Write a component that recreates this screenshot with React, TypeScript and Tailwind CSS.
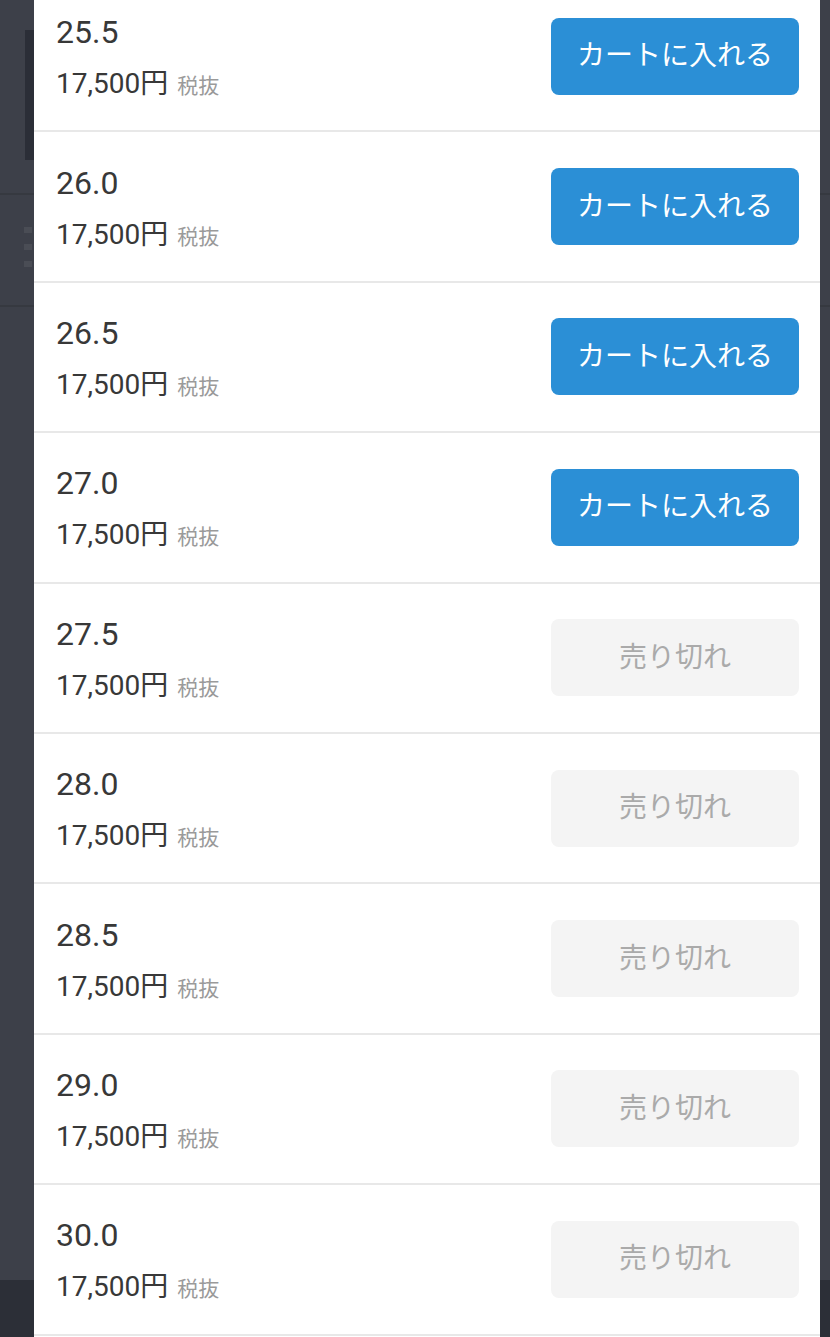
import React from "react";

const rows = [
  { size: "25.5", ok: true },
  { size: "26.0", ok: true },
  { size: "26.5", ok: true },
  { size: "27.0", ok: true },
  { size: "27.5", ok: false },
  { size: "28.0", ok: false },
  { size: "28.5", ok: false },
  { size: "29.0", ok: false },
  { size: "30.0", ok: false },
];

export default function App() {
  return (
    <div
      className="relative w-[830px] h-[1337px] overflow-hidden bg-[#3d4049]"
      style={{ fontFamily: "Roboto, 'Noto Sans CJK JP', sans-serif" }}
    >
      {/* dimmed page behind */}
      <div className="flex flex-col h-full">
        <div className="h-[195px] border-b-2 border-[#363940] pt-[30px]">
          <div className="ml-[25px] w-[10px] h-[130px] bg-[#2b2e37]" />
        </div>
        <div className="h-[112px] border-b-2 border-[#363940] flex flex-col gap-[11px] pt-[32px] pl-[24px]">
          <div className="w-[8px] h-[6px] bg-[#4a4d55]" />
          <div className="w-[8px] h-[6px] bg-[#4a4d55]" />
          <div className="w-[8px] h-[6px] bg-[#4a4d55]" />
        </div>
        <div className="flex-1" />
        <div className="h-[57px] bg-[#2c2f37]" />
      </div>

      {/* modal panel */}
      <div className="absolute top-0 left-[34px] w-[786px] h-full bg-white">
        <div className="mt-[-18px]">
          {rows.map((r) => (
            <div
              key={r.size}
              className="h-[150.4px] border-b-2 border-[#e8e8e8] flex items-center justify-between pl-[22px] pr-[21px]"
            >
              <div className="flex flex-col pt-[6px]">
                <div className="text-[32px] leading-[46px] text-[#383838]">{r.size}</div>
                <div className="mt-[6px] leading-[46px] flex items-baseline">
                  <span className="text-[28px] text-[#383838]">17,500円</span>
                  <span className="ml-[9px] text-[21px] text-[#9a9a9a]">税抜</span>
                </div>
              </div>
              {r.ok ? (
                <div className="w-[248px] h-[77px] rounded-[8px] bg-[#2b8fd6] flex items-center justify-center text-white text-[28px]">
                  カートに入れる
                </div>
              ) : (
                <div className="w-[248px] h-[77px] rounded-[8px] bg-[#f4f4f4] flex items-center justify-center text-[#aaaaaa] text-[28px]">
                  売り切れ
                </div>
              )}
            </div>
          ))}
        </div>
      </div>
    </div>
  );
}
